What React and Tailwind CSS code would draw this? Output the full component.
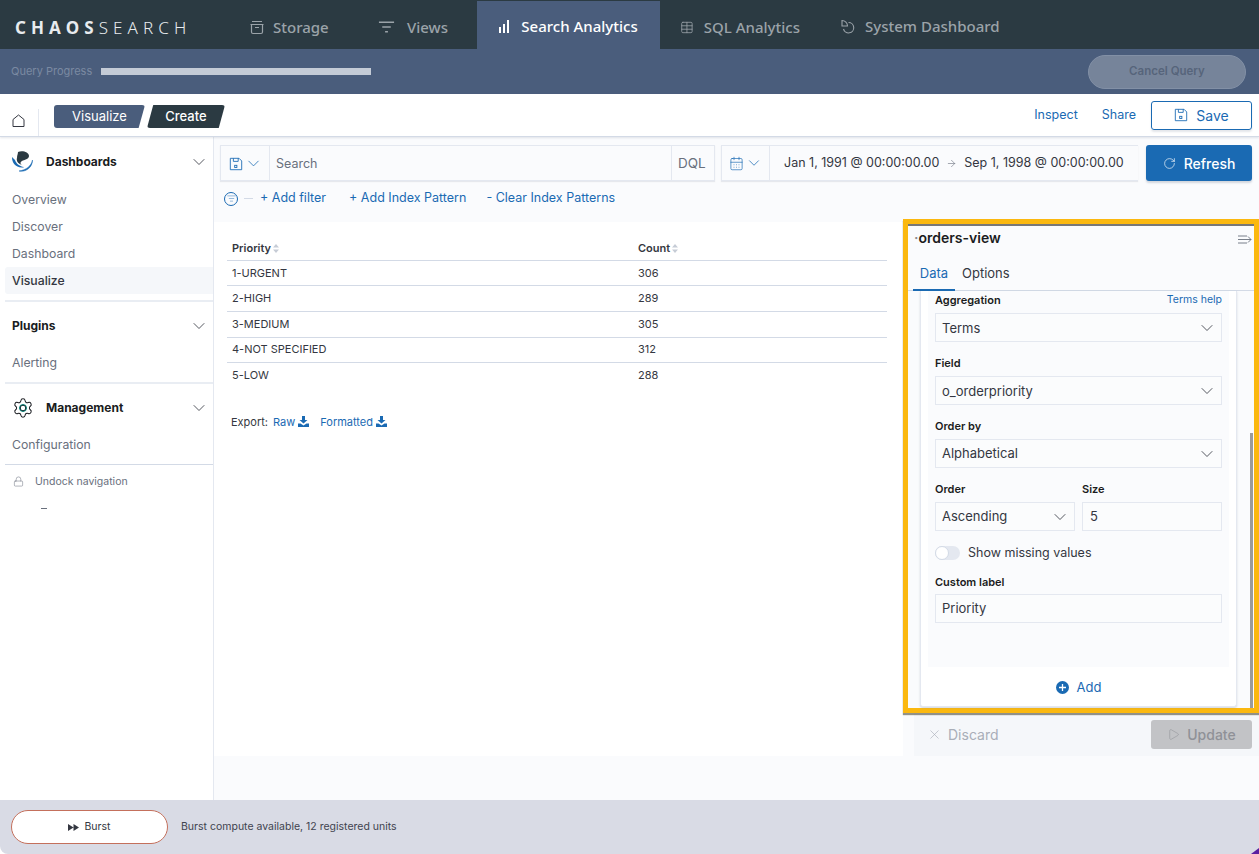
import React from "react";
import { ChevronDown, Table, RotateCw, CalendarDays, X, Play, Lock, Settings, ArrowRight, ListFilter } from "lucide-react";

function Tab({ icon, label, active, w, cls = "", text = "" }) {
  return (
    <div className={`flex items-center justify-center gap-[9px] h-full shrink-0 whitespace-nowrap ${active ? "bg-[#4a5d7c] text-white" : "text-[#9ba3a9]"} ${cls}`} style={{ width: w }}>
      {icon}
      <span className={`text-[15px] font-medium ${text}`} style={{ fontFamily: '"Noto Sans", sans-serif' }}>{label}</span>
    </div>
  );
}

const Floppy = ({ className = "", size = 16 }) => (
  <svg width={size} height={size} viewBox="0 0 16 16" fill="none" stroke="currentColor" strokeWidth="1" className={className}>
    <path d="M1.500 1.500h10l3 3v10h-13z" />
    <path d="M5 1.500v3.500h5.500V1.500" />
    <rect x="6.500" y="9.500" width="2.500" height="2.500" />
  </svg>
);

const DL = () => (
  <svg width="11" height="11" viewBox="0 0 11 11" fill="#1a6ab3">
    <path d="M4 0h3v4h2.500L5.500 7.500 1.500 4H4z" />
    <path d="M0 7.500h2.500l3 2 3-2H11V11H0z" />
  </svg>
);

const Sort = () => (
  <svg width="6" height="9" viewBox="0 0 6 9" fill="#c6ccd6" className="ml-[2px] inline-block">
    <path d="M3 0l3 3.500H0zM3 9L0 5.500h6z" />
  </svg>
);

function Row({ a, b, h = "h-[25.5px]", last }) {
  return (
    <div className={`flex items-center ${h} ${last ? "" : "border-b border-[#d3dae6]"} text-[11px] text-[#343741]`}>
      <div className="w-[411px] pl-[5px]">{a}</div>
      <div>{b}</div>
    </div>
  );
}

function SideHead({ icon, label, h = "h-[47px]" }) {
  return (
    <div className={`flex items-center ${h} pl-[12px] pr-[4px]`}>
      {icon && <span className="w-[34px] flex items-center">{icon}</span>}
      <span className="flex-1 text-[12px] font-bold text-[#1a1c21]">{label}</span>
      <ChevronDown size={20} strokeWidth={1} className="text-[#343741]" />
    </div>
  );
}

const SideItem = ({ children, active }) => (
  <div className={`h-[27px] flex items-center text-[12.25px] pl-[7px] pt-[1px] ml-[5px] rounded-l-[3px] ${active ? "bg-[#f5f7fa] text-[#343741] font-medium" : "text-[#69707d]"}`}>{children}</div>
);

function Select({ value, className = "", textCls = "" }) {
  return (
    <div className={`h-[29px] flex items-center justify-between border border-[#e4e8f0] bg-[#fbfcfd] pl-[6px] pr-[4px] text-[13px] text-[#343741] ${className}`}>
      <span className={textCls}>{value}</span>
      <ChevronDown size={20} strokeWidth={1} className="text-[#343741]" />
    </div>
  );
}

const Label = ({ children, className = "" }) => (
  <div className={`text-[11px] font-semibold text-[#1a1c21] leading-[14px] ${className}`}>{children}</div>
);

export default function App() {
  return (
    <div className="w-[1259px] h-[854px] flex flex-col overflow-hidden bg-white relative" style={{ fontFamily: 'Inter, sans-serif' }}>
      {/* Header */}
      <div className="h-[49px] bg-[#2b3a42] flex shrink-0 pt-[1px]">
        <div className="w-[249px] shrink-0 pl-[15px] pt-[5px] flex items-center text-[17px] tracking-[5.100px] text-[#e8ebee] whitespace-nowrap" style={{ fontFamily: '"Noto Sans", sans-serif' }}>
          <span className="font-bold">CHAOS</span><span className="font-light">SEARCH</span>
        </div>
        <Tab w={80} label="Storage" cls="!justify-start pt-[4px] !gap-[8px]" icon={
          <svg width="16" height="16" viewBox="0 0 16 16" fill="none" stroke="currentColor" strokeWidth="1.200"><path d="M3 2.500h10M1.500 5.500h13M2.500 5.500v7.500a1.500 1.500 0 001.500 1.500h8a1.500 1.500 0 001.500-1.500V5.500M6 8.500h4" /></svg>} />
        <div className="w-[49px] shrink-0" />
        <Tab w={70} label="Views" cls="!justify-start pt-[4px] !gap-[12px]" icon={<svg width="18" height="14" viewBox="0 0 18 14" fill="none" stroke="currentColor" strokeWidth="1.400"><path d="M1 2h16M4.500 7h9M7.500 12h3" /></svg>} />
        <div className="w-[29px] shrink-0" />
        <Tab w={183} active label="Search Analytics" cls="!gap-[12px] pt-[3px]" icon={<svg width="10" height="13" viewBox="0 0 10 13" fill="#fff"><rect x="0" y="7" width="2" height="6" /><rect x="4" y="4" width="2" height="9" /><rect x="8" y="0" width="2" height="13" /></svg>} />
        <div className="w-[20px] shrink-0" />
        <Tab w={120} label="SQL Analytics" cls="!justify-start !gap-[10px] pt-[5px]" text="text-[14px]" icon={<Table size={15} strokeWidth={1.400} />} />
        <div className="w-[41px] shrink-0" />
        <Tab w={170} label="System Dashboard" cls="!justify-start !gap-[10px] pt-[3px]" icon={
          <svg width="14" height="15" viewBox="0 0 14 15" fill="none" stroke="currentColor" strokeWidth="1.100"><path d="M7.500 3.500a5.200 5.200 0 11-5 6.500M1 7V1.500A5.500 5.500 0 016.500 7z" /></svg>} />
      </div>

      {/* Progress bar */}
      <div className="h-[45px] bg-[#4a5d7c] flex items-center shrink-0 pl-[11px] pr-[13px]">
        <span className="text-[11px] text-[#7b8aa2] w-[90px] whitespace-nowrap">Query Progress</span>
        <div className="w-[270px] h-[7px] bg-[#c4cbd6]" />
        <div className="flex-1" />
        <div className="w-[158px] h-[34px] rounded-[17px] border border-[#8290a6] bg-[#76849a] flex items-center justify-center text-[11.500px] font-semibold text-[#56647b]">Cancel Query</div>
      </div>

      {/* Breadcrumb */}
      <div className="h-[43px] shrink-0 flex items-center border-b border-[#d3dae6] shadow-[0_1px_2px_rgba(120,130,150,0.2)] relative z-10 pr-[7px]">
        <div className="w-[39px] h-[27px] self-end flex items-start pt-[5px] pl-[12px] border-r border-[#e4e8f0]">
          <svg width="13" height="13" viewBox="0 0 13 13" fill="none" stroke="#343741" strokeWidth="1"><path d="M1 5.500L6.500 1 12 5.500V12.500H1z" /></svg>
        </div>
        <div className="ml-[15px] mt-[3px] w-[91px] h-[23px] bg-[#4a5d7c] text-white text-[13px] flex items-center justify-center rounded-[3px] [clip-path:polygon(0_0,100%_0,93%_100%,0_100%)]">Visualize</div>
        <div className="ml-[2px] mt-[3px] w-[78px] h-[23px] bg-[#2b3a42] text-white text-[13px] font-medium flex items-center justify-center rounded-[3px] [clip-path:polygon(8%_0,100%_0,92%_100%,0_100%)]">Create</div>
        <div className="flex-1" />
        <span className="text-[12.500px] text-[#1a6ab3] mr-[24px] mt-[1px]">Inspect</span>
        <span className="text-[12.500px] text-[#1a6ab3] mr-[15px] mt-[1px]">Share</span>
        <div className="w-[101px] h-[29px] rounded-[3px] border border-[#1a6ab3] text-[#1a6ab3] flex items-center justify-center gap-[8px] text-[14px] shadow-[0_2px_2px_rgba(120,130,150,0.2)]">
          <Floppy size={14} /> Save
        </div>
      </div>

      {/* Body */}
      <div className="flex-1 flex min-h-0">
        {/* Sidebar */}
        <div className="w-[214px] shrink-0 bg-white border-r border-[#e4e8f0] flex flex-col">
          <SideHead label="Dashboards" h="h-[50px]" icon={
            <svg width="22" height="22" viewBox="0 0 22 22">
              <path d="M6 1C10-1 17 1 17 5 17 8 12 9 10 10 8 11 8 13 10 14 6 13 4 10 5 7 5 4 6 3 6 1z" fill="#2b3a42" />
              <path d="M0 6C0 12 3 16 10 16.500 11 16.500 11.500 16.500 12 16 7 15.500 4 12 3 9z" fill="#1a6ab3" />
              <path d="M7 20C13 21.500 20.500 17 20.500 9 19.500 15 14 19 7 20z" fill="#1a6ab3" stroke="#1a6ab3" strokeWidth="0.500" />
            </svg>} />
          <div className="-mt-[1px]">
            <SideItem>Overview</SideItem>
            <SideItem>Discover</SideItem>
            <SideItem>Dashboard</SideItem>
            <SideItem active>Visualize</SideItem>
          </div>
          <div className="ml-[5px] border-b-2 border-[#e9edf3] mt-[6px]" />
          <SideHead label="Plugins" />
          <SideItem>Alerting</SideItem>
          <div className="ml-[5px] border-b-2 border-[#e9edf3] mt-[6px]" />
          <SideHead label="Management" icon={
            <span className="relative flex">
              <Settings size={22} strokeWidth={1.100} className="text-[#1a1c21]" />
              <span className="absolute left-[7px] top-[7px] w-[8px] h-[8px] rounded-full border-[1.500px] border-[#017d73]" />
            </span>} />
          <SideItem>Configuration</SideItem>
          <div className="ml-[5px] border-b border-[#d3dae6] mt-[6px]" />
          <div className="flex items-center h-[33px] pl-[13px] gap-[11px] text-[10.500px] text-[#69707d]">
            <Lock size={11} strokeWidth={1.100} /> Undock navigation
          </div>
          <div className="ml-[41px] mt-[10px] w-[6px] h-[1px] bg-[#69707d]" />
        </div>

        {/* Main */}
        <div className="flex-1 bg-[#fafbfd] flex flex-col min-w-0">
          {/* Search row */}
          <div className="flex pl-[6px] pr-[7px] pt-[8px] h-[45px] shrink-0">
            <div className="w-[495px] h-[36px] flex items-stretch border border-[#e4e8f0] shadow-[0_1px_1px_rgba(120,130,150,0.15)]">
              <div className="w-[49px] shrink-0 flex items-center justify-center gap-[1px] border-r border-[#e4e8f0] text-[#1a6ab3] pt-[1px] pl-[2px]">
                <Floppy size={14} />
                <ChevronDown size={19} strokeWidth={1} />
              </div>
              <div className="flex-1 flex items-center pl-[6px] pt-[2px] text-[12.500px] text-[#69707d]">Search</div>
              <div className="w-[43px] shrink-0 border-l border-[#e4e8f0] flex items-center pl-[6px] pt-[1px] text-[13.500px] text-[#69707d]">DQL</div>
            </div>
            <div className="ml-[6px] w-[417px] h-[36px] flex items-stretch border border-[#e4e8f0] border-r-0 shadow-[0_1px_1px_rgba(120,130,150,0.15)]">
              <div className="w-[48px] shrink-0 flex items-center justify-center gap-[1px] border-r border-[#e4e8f0] text-[#1a6ab3]">
                <CalendarDays size={15} strokeWidth={1.100} />
                <ChevronDown size={18} strokeWidth={1} />
              </div>
              <div className="flex items-center pl-[14px] pt-[1px] text-[12.500px] text-[#343741] whitespace-nowrap">
                Jan 1, 1991 @ 00:00:00.00
                <ArrowRight size={11} strokeWidth={1.300} className="mx-[7px] text-[#69707d]" />
                Sep 1, 1998 @ 00:00:00.00
              </div>
            </div>
            <div className="ml-[8px] w-[106px] h-[36px] rounded-[3px] bg-[#1a6ab3] text-white flex items-center justify-center gap-[8px] text-[14px] font-medium shadow-[0_2px_2px_rgba(120,130,150,0.3)]">
              <RotateCw size={13} strokeWidth={1.200} /> Refresh
            </div>
          </div>

          {/* Filter row */}
          <div className="h-[32px] shrink-0 flex items-center pl-[10px] pt-[1px] text-[12.500px] text-[#1a6ab3]">
            <span className="w-[14px] h-[14px] rounded-full border border-[#1a6ab3] flex items-center justify-center"><ListFilter size={9} strokeWidth={1.200} /></span>
            <span className="w-[9px] h-[1px] bg-[#d3dae6] ml-[6px]" />
            <span className="ml-[7px]">+ Add filter</span>
            <span className="ml-[23px] -mt-[1px]">+ Add Index Pattern</span>
            <span className="ml-[20px] -mt-[1px]">- Clear Index Patterns</span>
          </div>

          {/* Content */}
          <div className="flex mt-[8px] h-[534px] shrink-0">
            <div className="flex-1 bg-white pl-[13px] pr-[16px] pt-[14px] min-w-0">
              <div className="flex items-center h-[25px] border-b border-[#d3dae6] text-[11px] font-semibold text-[#343741]">
                <div className="w-[411px] pl-[5px]">Priority<Sort /></div>
                <div>Count<Sort /></div>
              </div>
              <Row a="1-URGENT" b="306" h="h-[25px]" />
              <Row a="2-HIGH" b="289" />
              <Row a="3-MEDIUM" b="305" h="h-[26px]" />
              <Row a="4-NOT SPECIFIED" b="312" h="h-[25px]" />
              <Row a="5-LOW" b="288" h="h-[25px]" last />
              <div className="flex items-center mt-[26px] pl-[4px] text-[11px] text-[#343741]">
                Export:
                <span className="ml-[5px] text-[#1a6ab3] flex items-center gap-[3px]">Raw <DL /></span>
                <span className="ml-[11px] text-[#1a6ab3] flex items-center gap-[3px]">Formatted <DL /></span>
              </div>
            </div>

            {/* Panel */}
            <div className="w-[356px] shrink-0 flex flex-col -mt-[3px]">
              <div className="h-[494px] shrink-0 border-[5px] border-[#fbb80f] bg-[#fafbfd] flex flex-col shadow-[0_2px_1px_rgba(60,60,40,0.55)] relative">
                <div className="absolute inset-x-0 top-0 h-[2px] bg-[#777]" />
                <div className="h-[28px] shrink-0 flex items-center justify-between pl-[6px] pr-[2px]">
                  <span className="text-[14px] font-semibold text-[#1a1c21] -mt-[1px]"><span className="text-[#888]">·</span>orders-view</span>
                  <svg width="14" height="9" viewBox="0 0 14 9" fill="none" stroke="#69707d" strokeWidth="0.900" className="mt-[2px]"><path d="M0 1h9M0 4.500h13M0 8h9M10 1.500l3 3-3 3" /></svg>
                </div>
                <div className="h-[39px] shrink-0 flex items-end border-b border-[#d3dae6] px-[5px]">
                  <span className="h-[33px] w-[42px] flex items-center justify-center text-[13px] text-[#1a6ab3] border-b-2 border-[#1a6ab3] -mb-[1px]">Data</span>
                  <span className="h-[33px] flex items-center pl-[7px] text-[13px] text-[#343741]">Options</span>
                </div>
                <div className="flex-1 min-h-0 flex relative">
                  <div className="ml-[12px] w-[317px] bg-white border border-[#e4e8f0] border-t-0 rounded-b-[3px] shadow-[0_1px_2px_rgba(120,130,150,0.3)] flex flex-col mb-[1px]">
                    <div className="mx-[7px] h-[376px] shrink-0 bg-[#fafbfd] px-[7px] pt-[2px]">
                      <div className="flex justify-between items-center h-[14px]">
                        <Label>Aggregation</Label>
                        <span className="text-[10.500px] text-[#1a6ab3]">Terms help</span>
                      </div>
                      <Select value="Terms" className="mt-[6px]" textCls="pt-[2px]" />
                      <Label className="mt-[14px]">Field</Label>
                      <Select value="o_orderpriority" className="mt-[6px]" textCls="pt-[2px]" />
                      <Label className="mt-[14px]">Order by</Label>
                      <Select value="Alphabetical" className="mt-[6px]" />
                      <div className="flex gap-[7px] mt-[14px]">
                        <div className="w-[140px]"><Label>Order</Label><Select value="Ascending" className="mt-[6px]" /></div>
                        <div className="w-[140px]"><Label>Size</Label>
                          <div className="mt-[6px] h-[29px] flex items-center border border-[#e4e8f0] bg-[#fbfcfd] pl-[7px] text-[13px] text-[#343741]">5</div>
                        </div>
                      </div>
                      <div className="flex items-center mt-[14px] h-[15px] text-[12.500px] text-[#343741]">
                        <span className="w-[25px] h-[14px] rounded-full bg-[#e4e8f0] relative mr-[8px]">
                          <span className="absolute left-0 top-0 w-[14px] h-[14px] rounded-full bg-white border border-[#d3dae6]" />
                        </span>
                        <span className="pt-[1px]">Show missing values</span>
                      </div>
                      <Label className="mt-[15px]">Custom label</Label>
                      <div className="mt-[5px] h-[29px] flex items-center border border-[#e4e8f0] bg-[#fbfcfd] pl-[6px] text-[13px] text-[#343741]">Priority</div>
                    </div>
                    <div className="flex-1 flex items-center justify-center gap-[8px] pt-[2px] text-[13px] text-[#1a6ab3]">
                      <span className="w-[13px] h-[13px] rounded-full bg-[#1a6ab3] flex items-center justify-center">
                        <svg width="7" height="7" viewBox="0 0 7 7" stroke="#fff" strokeWidth="1.300"><path d="M3.500 0v7M0 3.500h7" /></svg>
                      </span>
                      Add
                    </div>
                  </div>
                  <div className="absolute right-[1px] top-[142px] bottom-0 w-[3px] bg-[#9b9b9b]" />
                </div>
              </div>
              <div className="flex-1 bg-[#f5f7fa] ml-[11px] flex items-center justify-between pl-[13px] pr-[7px]">
                <div className="flex items-center gap-[6px] text-[14px] text-[#a9aeb8]">
                  <X size={15} strokeWidth={1} /> Discard
                </div>
                <div className="w-[101px] h-[29px] rounded-[3px] bg-[#c2c3c6] flex items-center justify-center gap-[7px] text-[14px] font-medium text-[#8f9197]">
                  <Play size={13} strokeWidth={1} /> Update
                </div>
              </div>
            </div>
          </div>
        </div>
      </div>

      {/* Footer */}
      <div className="h-[54px] shrink-0 bg-[#d9dbe5] flex items-center pl-[11px] relative rounded-bl-[8px]">
        <div className="w-[157px] h-[34px] rounded-[17px] bg-white border border-[#c4705c] flex items-center justify-center gap-[5px] text-[10.500px] text-[#343741]">
          <svg width="11" height="7" viewBox="0 0 11 7" fill="#343741"><path d="M0 0l5.500 3.500L0 7zM5.500 0L11 3.500 5.500 7z" /></svg>
          Burst
        </div>
        <span className="ml-[13px] text-[10.500px] text-[#41434f]">Burst compute available, 12 registered units</span>
        <div className="absolute right-0 bottom-0 w-[8px] h-[6px] bg-[#5a1ea0] [clip-path:polygon(100%_0,100%_100%,0_100%)]" />
      </div>
    </div>
  );
}
